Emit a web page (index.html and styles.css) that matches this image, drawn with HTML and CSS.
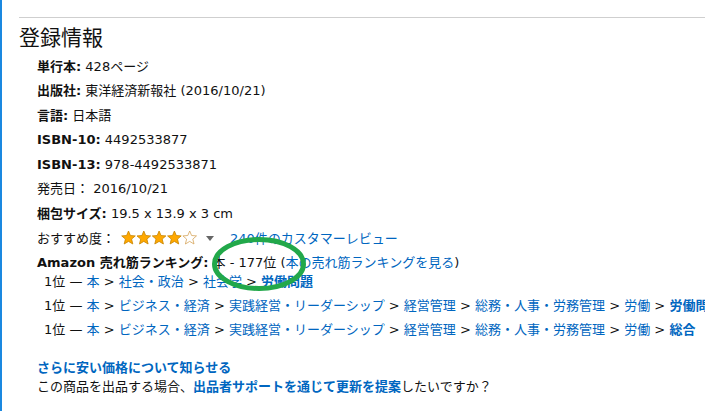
FILE: index.html
```html
<!DOCTYPE html>
<html lang="ja">
<head>
  <meta charset="UTF-8" />
  <title>登録情報</title>
  <link rel="stylesheet" href="styles.css">
</head>
<body>
  <div class="page">
    <hr class="divider">
    <h2 class="section-title">登録情報</h2>

    <ul class="details">
      <li><b>単行本:</b> 428ページ</li>
      <li><b>出版社:</b> 東洋経済新報社 (2016/10/21)</li>
      <li><b>言語:</b> 日本語</li>
      <li><b>ISBN-10:</b> 4492533877</li>
      <li><b>ISBN-13:</b> 978-4492533871</li>
      <li>発売日： 2016/10/21</li>
      <li><b>梱包サイズ:</b> 19.5 x 13.9 x 3 cm</li>
      <li class="rating">
        <span>おすすめ度：</span>
        <span class="stars">
          <svg viewBox="0 0 76 16" width="76" height="16">
            <defs>
              <path id="star" d="M7.5 1 L9.4 5.5 L14.3 5.9 L10.6 9.1 L11.8 14 L7.5 11.4 L3.2 14 L4.4 9.1 L0.7 5.9 L5.6 5.5 Z"/>
            </defs>
            <use href="#star" x="0" fill="#ffa800" stroke="#c68400" stroke-width="0.8"/>
            <use href="#star" x="15.3" fill="#ffa800" stroke="#c68400" stroke-width="0.8"/>
            <use href="#star" x="30.6" fill="#ffa800" stroke="#c68400" stroke-width="0.8"/>
            <use href="#star" x="45.9" fill="#ffa800" stroke="#c68400" stroke-width="0.8"/>
            <use href="#star" x="61.2" fill="#fff" stroke="#d6a45a" stroke-width="0.8"/>
          </svg>
          <span class="caret"></span>
        </span>
        <a href="#">240件のカスタマーレビュー</a>
      </li>
      <li class="rank">
        <b>Amazon 売れ筋ランキング:</b> 本 - 177位 (<a href="#">本の売れ筋ランキングを見る</a>)
        <ul class="ladder">
          <li>1位 — <a href="#">本</a> &gt; <a href="#">社会・政治</a> &gt; <a href="#">社会学</a> &gt; <b><a href="#">労働問題</a></b></li>
          <li>1位 — <a href="#">本</a> &gt; <a href="#">ビジネス・経済</a> &gt; <a href="#">実践経営・リーダーシップ</a> &gt; <a href="#">経営管理</a> &gt; <a href="#">総務・人事・労務管理</a> &gt; <a href="#">労働</a> &gt; <b><a href="#">労働問題</a></b></li>
          <li>1位 — <a href="#">本</a> &gt; <a href="#">ビジネス・経済</a> &gt; <a href="#">実践経営・リーダーシップ</a> &gt; <a href="#">経営管理</a> &gt; <a href="#">総務・人事・労務管理</a> &gt; <a href="#">労働</a> &gt; <b><a href="#">総合</a></b></li>
        </ul>
      </li>
    </ul>

    <div class="price-alert">
      <p><a href="#"><b>さらに安い価格について知らせる</b></a></p>
      <p>この商品を出品する場合、<a href="#"><b>出品者サポートを通じて更新を提案</b></a>したいですか？</p>
    </div>

    <svg class="marker" viewBox="0 0 100 60" width="100" height="60">
      <ellipse cx="50" cy="30" rx="44.5" ry="24.5" fill="none" stroke="#22a84a" stroke-width="5"/>
    </svg>
  </div>
</body>
</html>
```

FILE: styles.css
```css
* {
  box-sizing: border-box;
  margin: 0;
  padding: 0;
}
body {
  font-family: "DejaVu Sans", Verdana, "Noto Sans CJK JP", sans-serif;
  font-size: 13px;
  line-height: 19px;
  color: #111;
  background: #fff;
  border-left: 2px solid #1a88e0;
  min-height: 100vh;
  overflow: hidden;
}
a {
  color: #0066c0;
  text-decoration: none;
}
.page {
  position: relative;
  padding: 17px 0 0 17px;
}
.divider {
  border: none;
  border-top: 1px solid #cfcfcf;
  margin: 0;
}
.section-title {
  font-family: "Noto Sans CJK JP", sans-serif;
  font-size: 21px;
  font-weight: normal;
  line-height: 26px;
  height: 26px;
  margin-top: 5px;
}
.details {
  list-style: none;
  margin-top: 7.5px;
  padding-left: 18px;
}
.details > li {
  min-height: 19px;
  margin-bottom: 5.6px;
  white-space: nowrap;
}
.details > li:not(.rank) {
  height: 19px;
}
.rating {
  display: flex;
  align-items: center;
}
.stars {
  display: inline-flex;
  align-items: center;
  gap: 9px;
  margin: 0 16px 0 6px;
}
.stars svg {
  display: block;
}
.caret {
  width: 0;
  height: 0;
  border-left: 4px solid transparent;
  border-right: 4px solid transparent;
  border-top: 5px solid #666;
}
.ladder {
  list-style: none;
  padding-left: 7px;
}
.ladder li {
  height: 19px;
  margin-bottom: 5px;
  white-space: nowrap;
}
.price-alert {
  padding-left: 18px;
  margin-top: 18.6px;
}
.price-alert p {
  height: 19px;
}
.marker {
  position: absolute;
  left: 207px;
  top: 234px;
}
```
